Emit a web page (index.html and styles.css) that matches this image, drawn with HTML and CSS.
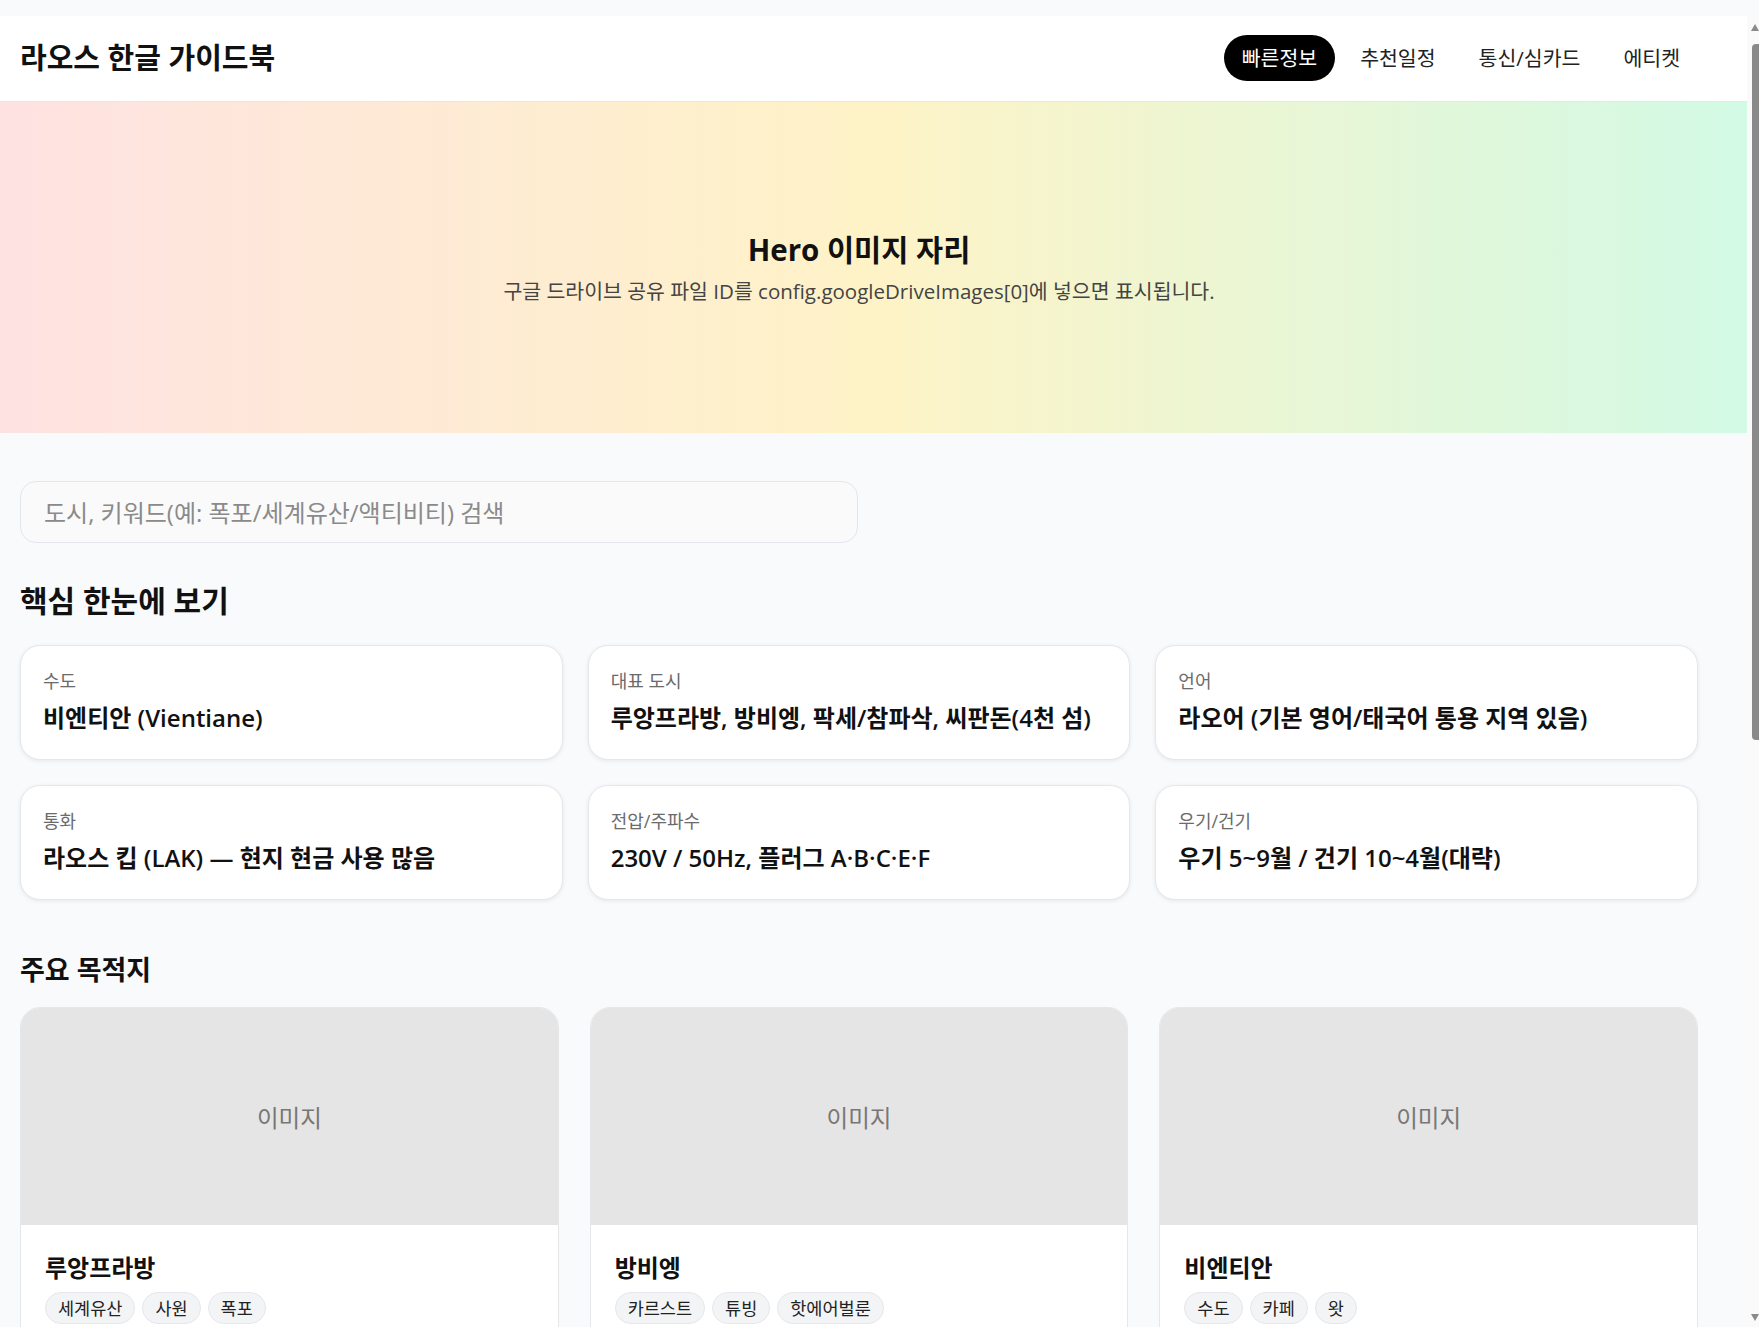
FILE: index.html
```html
<!DOCTYPE html>
<html lang="ko">
<head>
<meta charset="utf-8">
<title>라오스 한글 가이드북</title>
<link rel="stylesheet" href="styles.css">
</head>
<body>
<div class="topgap"></div>
<header class="site-header">
  <div class="header-inner">
    <h1 class="brand">라오스 한글 가이드북</h1>
    <nav class="nav">
      <a class="nav-item active">빠른정보</a>
      <a class="nav-item">추천일정</a>
      <a class="nav-item">통신/심카드</a>
      <a class="nav-item">에티켓</a>
    </nav>
  </div>
</header>

<section class="hero">
  <div class="hero-inner">
    <h2 class="hero-title">Hero 이미지 자리</h2>
    <p class="hero-sub">구글 드라이브 공유 파일 ID를 config.googleDriveImages[0]에 넣으면 표시됩니다.</p>
  </div>
</section>

<main class="container">
  <input class="search" type="text" placeholder="도시, 키워드(예: 폭포/세계유산/액티비티) 검색">

  <h2 class="section-title first">핵심 한눈에 보기</h2>
  <div class="info-grid">
    <div class="info-card"><div class="info-label">수도</div><div class="info-value">비엔티안 (Vientiane)</div></div>
    <div class="info-card"><div class="info-label">대표 도시</div><div class="info-value">루앙프라방, 방비엥, 팍세/참파삭, 씨판돈(4천 섬)</div></div>
    <div class="info-card"><div class="info-label">언어</div><div class="info-value">라오어 (기본 영어/태국어 통용 지역 있음)</div></div>
    <div class="info-card"><div class="info-label">통화</div><div class="info-value">라오스 킵 (LAK) — 현지 현금 사용 많음</div></div>
    <div class="info-card"><div class="info-label">전압/주파수</div><div class="info-value">230V / 50Hz, 플러그 A·B·C·E·F</div></div>
    <div class="info-card"><div class="info-label">우기/건기</div><div class="info-value">우기 5~9월 / 건기 10~4월(대략)</div></div>
  </div>

  <h2 class="section-title second">주요 목적지</h2>
  <div class="dest-grid">
    <div class="dest-card">
      <div class="dest-img">이미지</div>
      <div class="dest-body">
        <h3 class="dest-name">루앙프라방</h3>
        <div class="tags"><span class="tag">세계유산</span><span class="tag">사원</span><span class="tag">폭포</span></div>
        <p class="dest-desc">메콩 강과 칸 강이 만나는 옛 왕도. 탁발 행렬과 꽝시 폭포로 유명합니다.</p>
      </div>
    </div>
    <div class="dest-card">
      <div class="dest-img">이미지</div>
      <div class="dest-body">
        <h3 class="dest-name">방비엥</h3>
        <div class="tags"><span class="tag">카르스트</span><span class="tag">튜빙</span><span class="tag">핫에어벌룬</span></div>
        <p class="dest-desc">석회암 산과 강이 어우러진 액티비티의 도시입니다.</p>
      </div>
    </div>
    <div class="dest-card">
      <div class="dest-img">이미지</div>
      <div class="dest-body">
        <h3 class="dest-name">비엔티안</h3>
        <div class="tags"><span class="tag">수도</span><span class="tag">카페</span><span class="tag">왓</span></div>
        <p class="dest-desc">라오스의 수도. 파뚜싸이와 탓루앙을 둘러볼 수 있습니다.</p>
      </div>
    </div>
    <div class="dest-card">
      <div class="dest-img">이미지</div>
      <div class="dest-body">
        <h3 class="dest-name">팍세/참파삭</h3>
        <div class="tags"><span class="tag">왓푸</span><span class="tag">볼라벤 고원</span><span class="tag">커피</span></div>
        <p class="dest-desc">남부의 관문. 세계유산 왓푸와 커피 농장이 있습니다.</p>
      </div>
    </div>
    <div class="dest-card">
      <div class="dest-img">이미지</div>
      <div class="dest-body">
        <h3 class="dest-name">씨판돈</h3>
        <div class="tags"><span class="tag">4천 섬</span><span class="tag">돌고래</span><span class="tag">휴식</span></div>
        <p class="dest-desc">메콩 강 위의 수많은 섬에서 느긋한 시간을 보낼 수 있습니다.</p>
      </div>
    </div>
  </div>
</main>

<div class="fake-scrollbar" aria-hidden="true">
  <span class="sb-up"></span>
  <span class="sb-thumb"></span>
  <span class="sb-down"></span>
</div>
</body>
</html>
```

FILE: styles.css
```css
* { box-sizing: border-box; }

html, body {
  margin: 0;
  padding: 0;
}

body {
  background: #f9fafb;
  color: #111111;
  font-family: "Open Sans", "Noto Sans CJK KR", sans-serif;
}

.topgap {
  height: 16px;
}

.site-header {
  background: #ffffff;
  border-bottom: 1px solid #e5e7eb;
}

.header-inner {
  width: 1718px;
  padding: 19px 20px 20px 20px;
  display: flex;
  align-items: center;
  justify-content: space-between;
}

.brand {
  margin: 0;
  font-size: 29px;
  font-weight: 700;
  line-height: 46px;
  color: #111111;
}

.nav {
  display: flex;
  gap: 7px;
}

.nav-item {
  display: block;
  padding: 0 18px;
  height: 46px;
  line-height: 46px;
  border-radius: 999px;
  font-size: 20.5px;
  color: #222222;
  text-decoration: none;
}

.nav-item.active {
  background: #000000;
  color: #ffffff;
}

.hero {
  height: 331px;
  background: linear-gradient(90deg, #fee2e2 0%, #fef3c7 50%, #d1fae5 100%);
  display: flex;
  align-items: center;
}

.hero-inner {
  width: 1718px;
  padding: 0 20px;
  text-align: center;
}

.hero-title {
  margin: 0;
  font-size: 29.5px;
  font-weight: 700;
  line-height: 40px;
  color: #111111;
}

.hero-sub {
  margin: 6px 0 0 0;
  font-size: 20.5px;
  line-height: 30px;
  color: #444444;
}

.container {
  width: 1718px;
  padding: 48px 20px 80px 20px;
}

.search {
  display: block;
  width: 838px;
  height: 62px;
  border: 1px solid #e3e6ec;
  border-radius: 16px;
  background: #fafafa;
  padding: 0 23px;
  font-family: inherit;
  font-size: 24px;
  color: #111111;
  outline: none;
}

.search::placeholder {
  color: #8a8a8a;
}

.section-title {
  margin: 0;
  font-weight: 700;
  line-height: 40px;
  color: #111111;
}

.section-title.first {
  margin: 38px 0 24px 0;
  font-size: 30px;
}

.section-title.second {
  margin: 50px 0 17px 0;
  font-size: 27px;
}

.info-grid {
  display: grid;
  grid-template-columns: repeat(3, 1fr);
  column-gap: 25px;
  row-gap: 25px;
}

.info-card {
  background: #ffffff;
  border: 1px solid #e5e7eb;
  border-radius: 20px;
  box-shadow: 0 1px 4px rgba(0, 0, 0, 0.08);
  padding: 23px 22px 20px 22px;
  height: 115px;
}

.info-label {
  font-size: 18px;
  line-height: 24px;
  color: #6b6b6b;
}

.info-value {
  margin-top: 8px;
  font-size: 24px;
  font-weight: 600;
  line-height: 34px;
  color: #111111;
  white-space: nowrap;
}

.dest-grid {
  display: grid;
  grid-template-columns: repeat(3, 1fr);
  column-gap: 31px;
  row-gap: 30px;
}

.dest-card {
  background: #ffffff;
  border: 1px solid #e5e7eb;
  border-radius: 20px;
  overflow: hidden;
}

.dest-img {
  height: 217px;
  background: #e5e5e5;
  display: flex;
  align-items: center;
  justify-content: center;
  font-size: 23.5px;
  color: #777777;
}

.dest-body {
  padding: 25px 24px 24px 24px;
}

.dest-name {
  margin: 0;
  font-size: 24px;
  font-weight: 700;
  line-height: 36px;
  color: #111111;
}

.tags {
  display: flex;
  gap: 7px;
  margin-top: 6px;
}

.tag {
  display: block;
  height: 32px;
  line-height: 30px;
  padding: 0 12px;
  border: 1px solid #e5e7eb;
  border-radius: 999px;
  background: #f3f4f6;
  font-size: 17.5px;
  color: #222222;
}

.dest-desc {
  margin: 14px 0 0 0;
  font-size: 16px;
  line-height: 24px;
  color: #555555;
}

/* emulated browser scrollbar, drawn over the right edge */
.fake-scrollbar {
  position: fixed;
  top: 16px;
  right: 0;
  bottom: 0;
  width: 12px;
  background: #fafafa;
}

.sb-up {
  position: absolute;
  top: 8px;
  right: 0;
  width: 0;
  height: 0;
  border-left: 4px solid transparent;
  border-right: 4px solid transparent;
  border-bottom: 7px solid #8a8a8a;
}

.sb-thumb {
  position: absolute;
  top: 28px;
  right: 0;
  width: 7px;
  height: 696px;
  background: #8a8a8a;
  border-radius: 4px 0 0 4px;
}

.sb-down {
  position: absolute;
  bottom: 6px;
  right: 0;
  width: 0;
  height: 0;
  border-left: 4px solid transparent;
  border-right: 4px solid transparent;
  border-top: 7px solid #8a8a8a;
}
```
